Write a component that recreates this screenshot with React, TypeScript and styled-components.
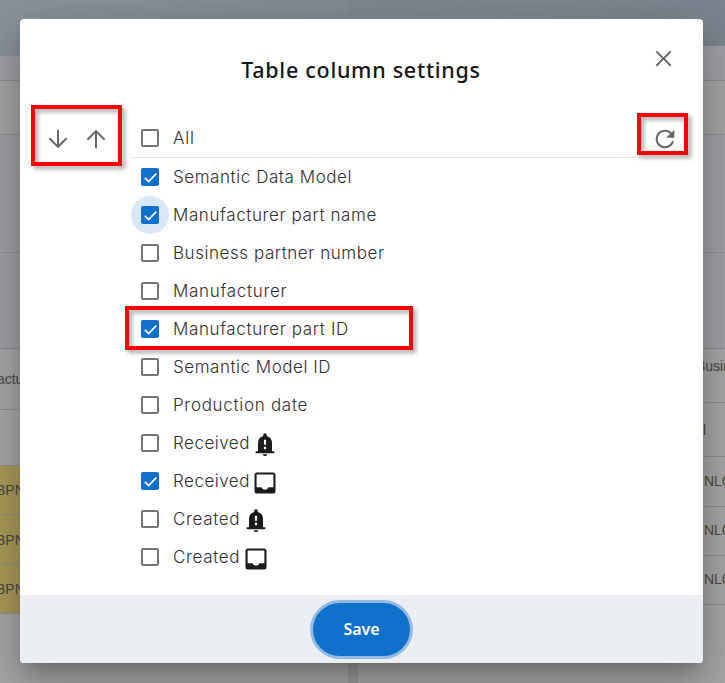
import React from 'react';
import styled, { createGlobalStyle } from 'styled-components';

const GlobalStyle = createGlobalStyle`
  * { box-sizing: border-box; }
  html, body { margin: 0; padding: 0; overflow: hidden; }
  body { font-family: Inter, "Liberation Sans", sans-serif; }
`;

const Screen = styled.div`
  position: relative;
  width: 725px;
  height: 683px;
  overflow: hidden;
  background: #a7a7a7;
`;

const Page = styled.div`
  display: flex;
  height: 100%;
`;

const Column = styled.div<{ $width?: number }>`
  display: flex;
  flex-direction: column;
  width: ${p => (p.$width ? `${p.$width}px` : 'auto')};
  flex: ${p => (p.$width ? 'none' : 1)};
  overflow: hidden;
`;

const Band = styled.div<{ $h: number; $bg: string; $line?: string; $pad?: number }>`
  display: flex;
  flex: none;
  align-items: center;
  height: ${p => p.$h}px;
  padding-bottom: ${p => p.$pad ?? 0}px;
  background: ${p => p.$bg};
  border-bottom: ${p => (p.$line ? `1px solid ${p.$line}` : '0')};
`;

const CellText = styled.span<{ $shift?: number; $heading?: boolean }>`
  flex: none;
  margin-left: ${p => p.$shift ?? 0}px;
  font: 400 14px "Liberation Sans", sans-serif;
  color: ${p => (p.$heading ? '#515151' : '#49473f')};
  -webkit-text-stroke: ${p => (p.$heading ? '0.2px #515151' : '0')};
  white-space: nowrap;
`;

const Gutter = styled.div`
  flex: none;
  width: 10px;
  background: linear-gradient(#7f8790 46px, #9a9a9a 46px);
`;

const Dialog = styled.section`
  position: absolute;
  left: 20px;
  top: 19px;
  display: flex;
  flex-direction: column;
  width: 683px;
  height: 644px;
  border-radius: 4px;
  background: #fff;
  box-shadow: 0 11px 15px -7px rgba(0, 0, 0, 0.2), 0 24px 38px 3px rgba(0, 0, 0, 0.14),
    0 9px 46px 8px rgba(0, 0, 0, 0.12);
`;

const DialogHeader = styled.header`
  display: grid;
  grid-template-columns: 80px 1fr 80px;
  align-items: center;
  height: 100px;
`;

const Title = styled.h1`
  grid-column: 2;
  margin: 0 0 0 -1px;
  text-align: center;
  font: 500 21.5px "Noto Sans", sans-serif;
  letter-spacing: 0.72px;
  color: #151515;
`;

const IconButton = styled.button`
  display: flex;
  align-items: center;
  justify-content: center;
  width: 38px;
  height: 38px;
  padding: 1px 0 0;
  border: 0;
  background: none;
  color: #666;
`;

const CloseButton = styled(IconButton)`
  justify-self: center;
  margin-bottom: 22px;
`;

const Body = styled.div`
  display: grid;
  grid-template-columns: 111px 509px 1fr;
  flex: 1;
`;

const Movers = styled.div`
  display: flex;
  height: 39px;
  padding-left: 19px;
`;

const ResetCell = styled.div`
  display: flex;
  height: 39px;
  padding-left: 6px;
`;

const ColumnList = styled.div`
  display: flex;
  flex-direction: column;
`;

const Row = styled.label<{ $divided?: boolean }>`
  display: flex;
  align-items: center;
  flex: none;
  height: ${p => (p.$divided ? 39 : 38)}px;
  border-bottom: ${p => (p.$divided ? '1px solid #e2e2e2' : '0')};
`;

const BoxArea = styled.span<{ $focus?: boolean }>`
  display: flex;
  align-items: center;
  width: 38px;
  height: 38px;
  padding-left: 10px;
  margin-right: 4px;
  border-radius: 50%;
  background: ${p => (p.$focus ? '#d9e8f7' : 'transparent')};
`;

const Box = styled.span<{ $on?: boolean }>`
  display: flex;
  align-items: center;
  justify-content: center;
  width: 18px;
  height: 18px;
  border: ${p => (p.$on ? '0' : '2px solid #747474')};
  border-radius: 2px;
  background: ${p => (p.$on ? '#0f71cb' : '#fff')};
`;

const Name = styled.span<{ $track: number }>`
  font-size: 17px;
  font-weight: 300;
  line-height: 22px;
  letter-spacing: ${p => p.$track}px;
  color: #303030;
  white-space: nowrap;
`;

const NameIcon = styled.span`
  display: flex;
  margin: 4px 0 0 1.5px;
  color: #1b1b1b;
`;

const Footer = styled.footer`
  display: flex;
  align-items: center;
  justify-content: center;
  height: 68px;
  padding-top: 1px;
  border-radius: 0 0 4px 4px;
  background: #ebeff4;
`;

const SaveButton = styled.button`
  width: 97px;
  height: 53px;
  padding: 0 0 1px;
  border: 0;
  border-radius: 27px;
  background: #0f71cb;
  box-shadow: 0 0 0 3px #94bce3;
  color: #fff;
  font: 600 16px "Noto Sans", sans-serif;
  letter-spacing: -0.1px;
`;

const Highlight = styled.div<{ $x: number; $y: number; $w: number; $h: number }>`
  position: absolute;
  left: ${p => p.$x}px;
  top: ${p => p.$y}px;
  width: ${p => p.$w}px;
  height: ${p => p.$h}px;
  border: 4px solid #fb0000;
  filter: drop-shadow(3px 3px 2px rgba(0, 0, 0, 0.35));
  pointer-events: none;
`;

const paths = {
  down: 'M20 12l-1.2-1.2-5.95 5.9V4h-1.7v12.7l-5.95-5.9L4 12l8 8 8-8z',
  up: 'M4 12l1.2 1.2 5.95-5.9V20h1.7V7.3l5.95 5.9L20 12l-8-8-8 8z',
  close: 'M19 6.2L17.8 5 12 10.8 6.2 5 5 6.2 10.8 12 5 17.8 6.2 19 12 13.2 17.8 19 19 17.8 13.2 12z',
  refresh:
    'M17.65 6.35C16.2 4.9 14.21 4 12 4c-4.42 0-7.99 3.58-7.99 8s3.57 8 7.99 8c3.73 0 6.84-2.55 7.73-6h-1.9c-.82 2.43-3.12 4.2-5.83 4.2-3.42 0-6.2-2.78-6.2-6.2s2.78-6.2 6.2-6.2c1.7 0 3.24.7 4.36 1.84L13 11h7V4l-2.35 2.35z',
  bell:
    'M4 19v-1.7h2V10q0-2.075 1.25-3.687T10.5 4.2v-.7q0-.625.438-1.062T12 2t1.063.438T13.5 3.5v.7q2 .5 3.25 2.113T18 10v7.3h2V19zM11.1 7.6v4.2h1.8V7.6zm0 6v2h1.8v-2zm.9 7.9q-.825 0-1.412-.5T10 20h4q0 .5-.587 1T12 21.5',
  inbox:
    'M19 3H5c-1.1 0-2 .9-2 2v14c0 1.1.9 2 2 2h14c1.1 0 2-.9 2-2V5c0-1.1-.9-2-2-2zm.2 12.6h-4.2c-.5 1.2-1.6 2.1-3 2.1s-2.5-.9-3-2.1H4.800V4.800h14.400z',
};

const Icon = ({ name, size = 28 }: { name: keyof typeof paths; size?: number }) => (
  <svg width={size} height={size} viewBox="0 0 24 24" fill="currentColor" fillRule="evenodd">
    <path d={paths[name]} />
  </svg>
);

const Check = () => (
  <svg width="17" height="17" viewBox="0 0 17 17" fill="none" stroke="#fff" strokeWidth="1.7">
    <path d="M2.9 8.8l3.7 3.7 7.7-7.9" />
  </svg>
);

type Item = { name: string; track: number; on?: boolean; focus?: boolean; icon?: 'bell' | 'inbox' };

const items: Item[] = [
  { name: 'Semantic Data Model', track: 0.56, on: true },
  { name: 'Manufacturer part name', track: 0.6, on: true, focus: true },
  { name: 'Business partner number', track: 0.55 },
  { name: 'Manufacturer', track: 0.7 },
  { name: 'Manufacturer part ID', track: 0.62, on: true },
  { name: 'Semantic Model ID', track: 0.53 },
  { name: 'Production date', track: 0.7 },
  { name: 'Received', track: 0.5, icon: 'bell' },
  { name: 'Received', track: 0.5, on: true, icon: 'inbox' },
  { name: 'Created', track: 0.67, icon: 'bell' },
  { name: 'Created', track: 0.67, icon: 'inbox' },
];

const LINE = '#8e8e8e';
const LILAC = '#a0a0a7';
const GREY = '#a7a7a7';

export default function App() {
  return (
    <>
      <GlobalStyle />
      <Screen>
        <Page>
          <Column $width={348}>
            <Band $h={56} $bg="linear-gradient(90deg, #8b9299, #828a93)" />
            <Band $h={25} $bg={LILAC} $line={LINE} />
            <Band $h={54} $bg="#a5a5a3" $line={LINE} />
            <Band $h={118} $bg={LILAC} $line={LINE} />
            <Band $h={96} $bg={LILAC} $line={LINE} />
            <Band $h={61} $bg={GREY} $line={LINE}>
              <CellText $heading $shift={-42}>Manufacturer</CellText>
            </Band>
            <Band $h={56} $bg={GREY} $line={LINE} />
            {[49, 50, 49].map((h, i) => (
              <Band key={i} $h={h} $bg="#ab9b59" $line="#8d8e8d">
                <CellText $shift={-4}>BPNL00</CellText>
              </Band>
            ))}
          </Column>
          <Gutter />
          <Column>
            <Band $h={46} $bg="linear-gradient(90deg, #7f8790, #7b858f)" />
            <Band $h={35} $bg={LILAC} $line={LINE} />
            <Band $h={54} $bg="#a5a5a3" $line={LINE} />
            <Band $h={118} $bg={LILAC} $line={LINE} />
            <Band $h={96} $bg={LILAC} $line={LINE} />
            <Band $h={54} $bg={GREY} $line={LINE} $pad={19}>
              <CellText $heading $shift={338}>Business</CellText>
            </Band>
            <Band $h={54} $bg={GREY} $line={LINE}>
              <CellText $shift={345}>l</CellText>
            </Band>
            {[50, 49, 49].map((h, i) => (
              <Band key={i} $h={h} $bg={GREY} $line={LINE} $pad={2}>
                <CellText $shift={346}>NL00</CellText>
              </Band>
            ))}
          </Column>
        </Page>
        <Dialog role="dialog">
          <DialogHeader>
            <Title>Table column settings</Title>
            <CloseButton aria-label="Close">
              <Icon name="close" size={27} />
            </CloseButton>
          </DialogHeader>
          <Body>
            <Movers>
              <IconButton aria-label="Move down"><Icon name="down" /></IconButton>
              <IconButton aria-label="Move up"><Icon name="up" /></IconButton>
            </Movers>
            <ColumnList>
              <Row $divided>
                <BoxArea><Box /></BoxArea>
                <Name $track={0.8}>All</Name>
              </Row>
              {items.map((item, i) => (
                <Row key={i}>
                  <BoxArea $focus={item.focus}>
                    <Box $on={item.on}>{item.on && <Check />}</Box>
                  </BoxArea>
                  <Name $track={item.track}>{item.name}</Name>
                  {item.icon && <NameIcon><Icon name={item.icon} /></NameIcon>}
                </Row>
              ))}
            </ColumnList>
            <ResetCell>
              <IconButton aria-label="Reset"><Icon name="refresh" /></IconButton>
            </ResetCell>
          </Body>
          <Footer>
            <SaveButton>Save</SaveButton>
          </Footer>
        </Dialog>
        <Highlight $x={31} $y={105} $w={91} $h={61} />
        <Highlight $x={637} $y={113} $w={51} $h={42} />
        <Highlight $x={125} $y={306} $w={288} $h={44} />
      </Screen>
    </>
  );
}
